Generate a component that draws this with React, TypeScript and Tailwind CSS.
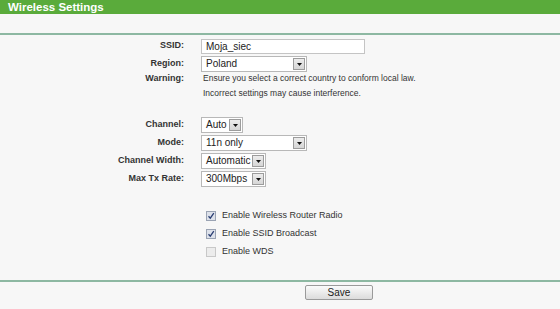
import React from "react";

function Select({ value, width }: { value: string; width: string }) {
  return (
    <div className={`flex h-[16px] items-center border border-[#b8b8b8] bg-white ${width}`}>
      <span className="flex-1 pl-[4px] text-[10px] leading-none text-[#222]">{value}</span>
      <span className="m-[1px] flex h-[12px] w-[12px] items-center justify-center border border-[#9c9c9c] bg-gradient-to-b from-[#ececec] to-[#d6d6d6]">
        <svg width="5" height="3" viewBox="0 0 5 3">
          <path d="M0 0h5L2.5 3z" fill="#111" />
        </svg>
      </span>
    </div>
  );
}

function Row({ label, children }: { label: string; children: React.ReactNode }) {
  return (
    <div className="flex h-[18px] items-center">
      <div className="w-[184px] text-right text-[9px] font-bold text-[#333]">{label}</div>
      <div className="ml-[17px] flex">{children}</div>
    </div>
  );
}

function Check({ checked, label }: { checked: boolean; label: string }) {
  return (
    <div className="flex h-[18px] items-center pl-[206px]">
      <span
        className={`flex h-[10px] w-[10px] items-center justify-center border ${
          checked ? "border-[#9aa3b3] bg-[#dde1ea]" : "border-[#c8c8c8] bg-[#ececec]"
        }`}
      >
        {checked && (
          <svg width="8" height="8" viewBox="0 0 8 8">
            <path d="M1.5 4.2l1.8 2L6.8 1.2" fill="none" stroke="#2b3f73" strokeWidth="1.3" />
          </svg>
        )}
      </span>
      <span className="ml-[6px] text-[9px] text-[#333]">{label}</span>
    </div>
  );
}

export default function App() {
  return (
    <div className="h-[309px] w-[560px] overflow-hidden bg-[#f7f7f7] font-['Liberation_Sans',Arial,sans-serif]">
      <div className="h-[14px] bg-[#5aab3b] pl-[8px] text-[11.5px] font-bold leading-[14px] text-white">
        Wireless Settings
      </div>
      <div className="h-[19px]" />
      <div className="h-[2px] bg-[#8db8a2]" />

      <div className="mt-[2px]">
        <Row label="SSID:">
          <div className="flex h-[15px] w-[164px] items-center border border-[#c4c4c4] bg-white pl-[4px] text-[10px] text-[#222]">
            Moja_siec
          </div>
        </Row>
        <Row label="Region:">
          <Select value="Poland" width="w-[106px]" />
        </Row>
        <div className="-mt-[2px] flex leading-[15px] text-[#333]">
          <div className="w-[184px] text-right text-[9px] font-bold">Warning:</div>
          <div className="ml-[19px] text-[8.5px]">
            Ensure you select a correct country to conform local law.
            <br />
            Incorrect settings may cause interference.
          </div>
        </div>
      </div>

      <div className="mt-[15px]">
        <Row label="Channel:">
          <Select value="Auto" width="w-[42px]" />
        </Row>
        <Row label="Mode:">
          <Select value="11n only" width="w-[106px]" />
        </Row>
        <Row label="Channel Width:">
          <Select value="Automatic" width="w-[65px]" />
        </Row>
        <Row label="Max Tx Rate:">
          <Select value="300Mbps" width="w-[65px]" />
        </Row>
      </div>

      <div className="mt-[19px]">
        <Check checked label="Enable Wireless Router Radio" />
        <Check checked label="Enable SSID Broadcast" />
        <Check checked={false} label="Enable WDS" />
      </div>

      <div className="mt-[19px] h-[2px] bg-[#8db8a2]" />
      <div className="mt-[3px] pl-[305px]">
        <button className="flex h-[15px] w-[68px] items-center justify-center rounded-[2px] border border-[#9a9a9a] bg-gradient-to-b from-[#fbfbfb] to-[#dcdcdc] text-[10px] text-[#222]">
          Save
        </button>
      </div>
    </div>
  );
}
